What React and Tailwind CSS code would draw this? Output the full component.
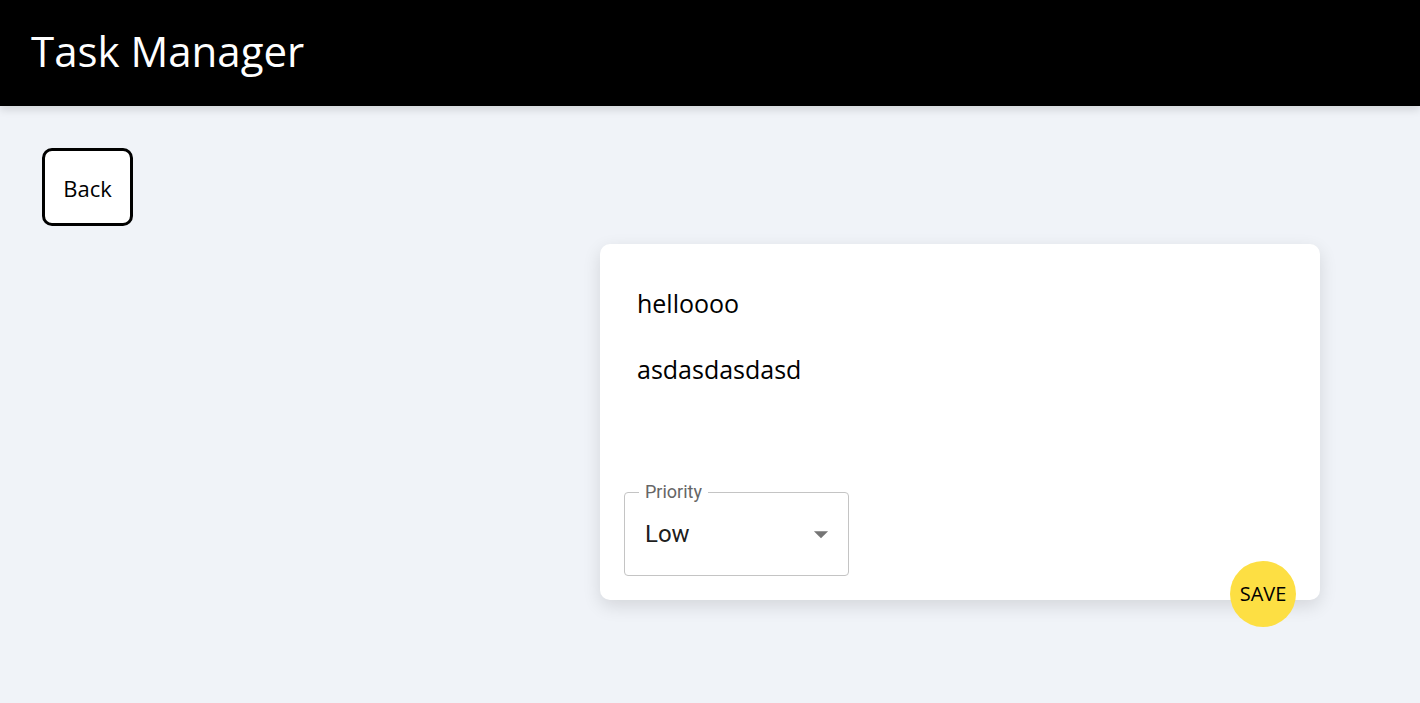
import { useState } from 'react';

const App = () => {
  const [priority] = useState('Low');

  return (
    <div className="min-h-screen bg-[#f0f3f8]" style={{ fontFamily: '"Open Sans", "Noto Sans", sans-serif' }}>
      {/* Top bar */}
      <header className="h-[106px] bg-black flex items-center px-[31px] shadow-[0_4px_8px_rgba(0,0,0,0.12)]">
        <h1 className="text-white text-[42px] leading-none -mt-[4px]">Task Manager</h1>
      </header>

      <div className="px-[42px] pt-[42px]">
        <button className="w-[91px] h-[78px] bg-white border-[3px] border-black rounded-[10px] text-[22px] text-black pt-[2px]">
          Back
        </button>
      </div>

      <div className="flex justify-end pr-[100px] mt-[18px]">
        <div className="relative w-[720px] h-[356px] bg-white rounded-[10px] shadow-[0_6px_18px_rgba(0,0,0,0.12)] px-[24px] pt-[47px] pb-[24px] flex flex-col">
          <p className="px-[13px] text-[25px] leading-none text-black">helloooo</p>
          <p className="px-[13px] mt-[41px] text-[25px] leading-none text-black">asdasdasdasd</p>

          <div className="mt-auto relative w-[225px] h-[84px] border border-[#c4c4c4] rounded-[4px] flex items-center px-[20px]" style={{ fontFamily: 'Roboto, sans-serif' }}>
            <span className="absolute -top-[12px] left-[14px] px-[6px] bg-white text-[18px] leading-[22px] text-[#666]">Priority</span>
            <span className="text-[24px] text-black/90 flex-1">{priority}</span>
            <svg width="34" height="34" viewBox="0 0 24 24" className="text-[#757575] -mr-[10px]">
              <path d="M7 10l5 5 5-5z" fill="currentColor" />
            </svg>
          </div>

          <button className="absolute right-[24px] -bottom-[27px] w-[66px] h-[66px] rounded-full bg-[#fddf43] text-[20px] text-black flex items-center justify-center">
            SAVE
          </button>
        </div>
      </div>
    </div>
  );
};

export default App;
